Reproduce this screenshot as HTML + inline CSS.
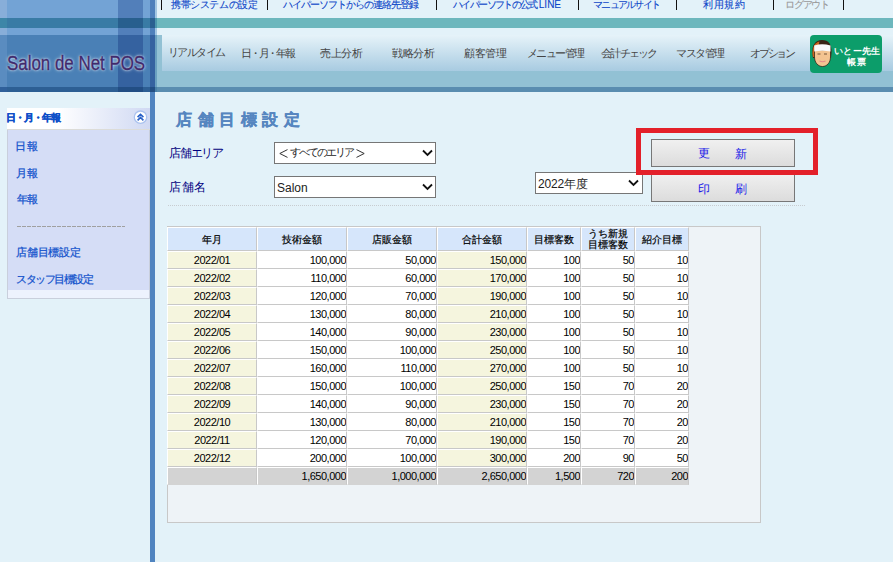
<!DOCTYPE html>
<html><head><meta charset="utf-8">
<style>
*{margin:0;padding:0;box-sizing:border-box}
html,body{width:893px;height:562px;overflow:hidden;background:#e3f2f9;font-family:"Liberation Sans",sans-serif;font-size:12px;color:#222}
.a{position:absolute}
.t{position:absolute;white-space:nowrap;line-height:1}
.tl{position:absolute;top:-2px;font-size:10px;color:#0d45c8;-webkit-text-stroke:0.1px;white-space:nowrap;line-height:12px}
.sep{position:absolute;top:0;width:1px;height:10px;background:#111}
.nv{position:absolute;top:47px;font-size:11px;color:#444;white-space:nowrap;line-height:12px}
.sb{position:absolute;left:17px;font-size:11px;color:#1252cc;-webkit-text-stroke:0.25px;white-space:nowrap;line-height:12px}

td{padding:0;border-left:1px solid #fff;border-top:1px solid #fff;border-right:1px solid #c8c8c8;border-bottom:1px solid #c8c8c8;color:#000;font-size:11px;line-height:11px;letter-spacing:-0.5px;white-space:nowrap;overflow:hidden}
tr.h td{height:24px;background:#d6e6fb;text-align:center;font-size:10px;line-height:11px;letter-spacing:0;-webkit-text-stroke:0.2px}
tr.r td{height:18px;background:#fff;text-align:right}
tr.r td.c{background:#f5f5de;text-align:center}
tr.r td.y{background:#f5f5de}
tr.tot td,tr.tot td.c{background:#d3d3d3;border-bottom-color:#d3d3d3}
</style></head><body>
<!-- header left tiles: cols 0-7,7-118,118-143,143-150,150-155,155-157 ; rows 0-18,18-28,28-35,35-87,87-92 -->
<div class="a" style="left:0;top:0;width:157px;height:92px;background:linear-gradient(to bottom,#73a3d5 0,#73a3d5 18px,#397ba5 18px,#397ba5 28px,#73a3d5 28px,#73a3d5 35px,#4a80b6 35px,#4a80b6 87px,#2d5f94 87px)"></div>
<div class="a" style="left:0;top:0;width:7px;height:92px;background:linear-gradient(to bottom,#88aed9 0,#88aed9 18px,#3d86a8 18px,#3d86a8 28px,#88aed9 28px,#88aed9 35px,#5a8cc0 35px,#5a8cc0 87px,#30609a 87px)"></div>
<div class="a" style="left:118px;top:0;width:25px;height:92px;background:linear-gradient(to bottom,#527fba 0,#527fba 18px,#285f8e 18px,#285f8e 28px,#527fba 28px,#527fba 35px,#3562a0 35px,#3562a0 87px,#224e84 87px)"></div>
<div class="a" style="left:150px;top:0;width:5px;height:92px;background:linear-gradient(to bottom,#4f80bb 0,#4f80bb 18px,#2a6090 18px,#2a6090 28px,#4f80bb 28px,#4f80bb 35px,#3562a0 35px,#3562a0 87px,#224e84 87px)"></div>
<div class="a" style="left:155px;top:0;width:2px;height:92px;background:linear-gradient(to bottom,#a3c6e2 0,#a3c6e2 18px,#4c97ae 18px,#4c97ae 28px,#a3c6e2 28px,#a3c6e2 35px,#6aa0c0 35px,#6aa0c0 87px,#4a80a8 87px)"></div>
<!-- right header -->
<div class="a" style="left:157px;top:18px;width:736px;height:10px;background:#6db7bd"></div>
<div class="a" style="left:157px;top:35px;width:736px;height:52px;background:#92c1d4"></div>
<div class="a" style="left:162px;top:35px;width:731px;height:36px;background:linear-gradient(#e6f3f9,#a8cbe1)"></div>
<div class="a" style="left:157px;top:87px;width:736px;height:5px;background:#5a8db0"></div>
<!-- vertical bar -->
<div class="a" style="left:150px;top:92px;width:5px;height:470px;background:#5084c0"></div>

<!-- logo -->
<div id="logo" class="t" style="left:7px;top:52px;font-size:21px;color:#3f2a6c;letter-spacing:0;transform:scaleX(0.805);transform-origin:0 0;-webkit-text-stroke:0.4px;text-shadow:0 0 4px rgba(235,245,255,0.95),0 0 2px #eef6ff">Salon de Net POS</div>

<!-- top links -->
<div class="sep" style="left:161px"></div>
<div id="tl1" class="tl" style="left:171px;top:-1px;letter-spacing:-0.38px;">携帯システムの設定</div>
<div class="sep" style="left:267px"></div>
<div id="tl2" class="tl" style="left:283px;top:-1px;letter-spacing:-1.0px;">ハイパーソフトからの連絡先登録</div>
<div class="sep" style="left:436px"></div>
<div id="tl3" class="tl" style="left:453px;top:-1px;letter-spacing:-1.62px;">ハイパーソフトの公式<span style="letter-spacing:0;margin-left:2px">LINE</span></div>
<div class="sep" style="left:578px"></div>
<div id="tl4" class="tl" style="left:593px;top:-1px;letter-spacing:-1.71px;">マニュアルサイト</div>
<div class="sep" style="left:676px"></div>
<div id="tl5" class="tl" style="left:703px;top:-1px;letter-spacing:0.67px;">利用規約</div>
<div class="sep" style="left:773px"></div>
<div id="tl6" class="tl" style="left:785px;top:-1px;letter-spacing:-1.25px;color:#999">ログアウト</div>
<div class="sep" style="left:843px"></div>

<!-- nav -->
<div id="nv1" class="nv" style="left:168px;top:46px;letter-spacing:-1.6px;">リアルタイム</div>
<div id="nv2" class="nv" style="left:241px;top:47px;letter-spacing:-2.2px;">日・月・年報</div>
<div id="nv3" class="nv" style="left:320px;top:47px;letter-spacing:-0.33px;">売上分析</div>
<div id="nv4" class="nv" style="left:392px;top:47px;letter-spacing:-0.33px;">戦略分析</div>
<div id="nv5" class="nv" style="left:464px;top:47px;letter-spacing:-0.33px;">顧客管理</div>
<div id="nv6" class="nv" style="left:527px;top:47px;letter-spacing:-1.6px;">メニュー管理</div>
<div id="nv7" class="nv" style="left:601px;top:47px;letter-spacing:-1.93px;">会計 チェック</div>
<div id="nv8" class="nv" style="left:676px;top:47px;letter-spacing:-1.5px;">マスタ管理</div>
<div id="nv9" class="nv" style="left:750px;top:47px;letter-spacing:-2.25px;">オプション</div>
<!-- green button -->
<div class="a" style="left:810px;top:35px;width:72px;height:38px;background:#0c9d6a;border-radius:4px"></div>
<svg class="a" style="left:811px;top:39px" width="22" height="28" viewBox="0 0 22 28">
  <path d="M1.5 15 C0.5 6 4.5 1 11 1 C17.5 1 21 5.5 20.5 14 L20 19 L2 19 Z" fill="#3a2414"/>
  <path d="M1.5 15 C1.5 8 3.5 3.5 8.5 2.5 L5 18 L2 18 Z" fill="#c8641e"/>
  <path d="M3.5 11 L19.5 11 L19.5 18 C19.5 23.5 16 27.5 11.5 27.5 C7 27.5 3.5 23.5 3.5 18 Z" fill="#f3c491" stroke="#2a1a10" stroke-width="0.7"/>
  <path d="M3.2 6.5 Q11 3.8 19.5 6.5 L19.5 12.5 Q11 10.8 3.2 12.5 Z" fill="#fafafa"/>
  <path d="M6.5 15 h3 M13 15 h3" stroke="#6a4a30" stroke-width="0.9"/>
  <path d="M8.5 22 Q11.5 23.5 14.5 22" stroke="#e58a8a" stroke-width="1.1" fill="none"/>
</svg>
<div id="g1" class="t" style="left:834px;top:47px;letter-spacing:0.25px;font-size:9px;color:#fff;font-weight:bold">いとー先生</div>
<div id="g2" class="t" style="left:847px;top:58px;letter-spacing:1.0px;font-size:9px;color:#fff;font-weight:bold">帳票</div>

<!-- sidebar -->
<div class="a" style="left:7px;top:108px;width:143px;height:191px;background:#d5ddf6;border:1px solid #c9cfdc;border-top:none"></div>
<div class="a" style="left:7px;top:108px;width:143px;height:22px;background:linear-gradient(to right,#ffffff 0,#ffffff 35%,#d0d9f3 100%);border-bottom:1px solid #dcdcd8"></div>
<div class="a" style="left:8px;top:290px;width:141px;height:8px;background:#edf2fd"></div>
<div id="sbh" class="t" style="left:6px;top:113px;letter-spacing:-1.0px;font-size:10px;font-weight:bold;color:#0f4fc8;-webkit-text-stroke:0.35px">日・月・年報</div>
<svg class="a" style="left:133px;top:110px" width="15" height="15" viewBox="0 0 15 15">
  <circle cx="7.5" cy="7.2" r="6.2" fill="#fff" stroke="#aac2ef" stroke-width="1.3"/>
  <path d="M4.6 7.2 L7.5 4.4 L10.4 7.2 M4.6 10.3 L7.5 7.5 L10.4 10.3" stroke="#2a62c8" stroke-width="1.7" fill="none"/>
</svg>
<div id="sb1" class="sb" style="left:15px;top:140px;letter-spacing:1.0px;">日報</div>
<div id="sb2" class="sb" style="left:16px;top:167px;letter-spacing:0.0px;">月報</div>
<div id="sb3" class="sb" style="left:17px;top:193px;letter-spacing:-1.0px;">年報</div>
<div class="a" style="left:17px;top:226px;width:108px;height:1px;background:repeating-linear-gradient(to right,#a0a0a0 0,#a0a0a0 4px,transparent 4px,transparent 5px)"></div>
<div id="sb4" class="sb" style="left:16px;top:246px;letter-spacing:-0.2px;">店舗目標設定</div>
<div id="sb5" class="sb" style="left:16px;top:273px;letter-spacing:-1.43px;">スタッフ目標設定</div>

<!-- title -->
<div id="ttl" class="t" style="left:176px;top:112px;letter-spacing:5.6px;font-size:16px;font-weight:bold;color:#5686c0;-webkit-text-stroke:0.3px;">店舗目標設定</div>
<div id="lb1" class="t" style="left:169px;top:147px;letter-spacing:-1.25px;font-size:12px;color:#000080;">店舗エリア</div>
<div id="lb2" class="t" style="left:169px;top:181px;letter-spacing:0.5px;font-size:12px;color:#000080;">店舗名</div>

<!-- selects -->
<div class="a" style="left:274px;top:142px;width:162px;height:22px;background:#fff;border:1px solid #767676"></div>
<svg class="a" style="left:279px;top:149px" width="9" height="9" viewBox="0 0 9 9"><path d="M8.5 0.6 L0.8 4.5 L8.5 8.4" stroke="#333" stroke-width="1" fill="none"/></svg><div id="s1b" class="t" style="left:290px;top:147px;letter-spacing:-2.0px;font-size:11px;color:#222">すべてのエリア</div><svg class="a" style="left:356px;top:149px" width="9" height="9" viewBox="0 0 9 9"><path d="M0.5 0.6 L8.2 4.5 L0.5 8.4" stroke="#333" stroke-width="1" fill="none"/></svg>
<svg class="a" style="left:422px;top:149px" width="11" height="8" viewBox="0 0 11 8"><path d="M1 1.5 L5.5 6 L10 1.5" stroke="#111" stroke-width="1.8" fill="none"/></svg>
<div class="a" style="left:274px;top:176px;width:162px;height:22px;background:#fff;border:1px solid #767676"></div>
<div id="st2" class="t" style="left:277px;top:182px;letter-spacing:0.0px;font-size:12px;color:#222">Salon</div>
<svg class="a" style="left:422px;top:183px" width="11" height="8" viewBox="0 0 11 8"><path d="M1 1.5 L5.5 6 L10 1.5" stroke="#111" stroke-width="1.8" fill="none"/></svg>
<div class="a" style="left:535px;top:172px;width:108px;height:22px;background:#fff;border:1px solid #767676"></div>
<div id="st3" class="t" style="left:538px;top:178px;letter-spacing:-0.2px;font-size:12px;color:#222">2022年度</div>
<svg class="a" style="left:628px;top:179px" width="11" height="8" viewBox="0 0 11 8"><path d="M1 1.5 L5.5 6 L10 1.5" stroke="#111" stroke-width="1.8" fill="none"/></svg>

<!-- buttons -->
<div class="a" style="left:651px;top:139px;width:144px;height:28px;background:linear-gradient(#f0f0f0,#dcdcdc);border:1px solid #777"></div>
<div id="b1" class="t" style="left:698px;top:147px;letter-spacing:0px;font-size:12px;color:#1818e8">更</div>
<div id="b2" class="t" style="left:735px;top:148px;letter-spacing:0px;font-size:12px;color:#1818e8">新</div>
<div class="a" style="left:651px;top:173px;width:144px;height:29px;background:linear-gradient(#f0f0f0,#dcdcdc);border:1px solid #777"></div>
<div id="b3" class="t" style="left:698px;top:183px;letter-spacing:0px;font-size:12px;color:#1818e8">印</div>
<div id="b4" class="t" style="left:735px;top:183px;letter-spacing:0px;font-size:12px;color:#1818e8">刷</div>
<div class="a" style="left:636px;top:128px;width:182px;height:47px;border:5px solid #e3202a"></div>

<!-- dotted line -->
<div class="a" style="left:168px;top:205px;width:637px;height:1px;background:repeating-linear-gradient(to right,#c8ccd0 0,#c8ccd0 1px,transparent 1px,transparent 2px)"></div>

<!-- table container -->
<div class="a" style="left:167px;top:226px;width:594px;height:297px;background:#eef3f7;border:1px solid #c8c8c8"></div>
<table class="a" style="left:167px;top:227px;border-collapse:separate;border-spacing:0;table-layout:fixed;width:522px">
<colgroup><col style="width:90px"><col style="width:90px"><col style="width:90px"><col style="width:90px"><col style="width:54px"><col style="width:54px"><col style="width:54px"></colgroup>
<tr class="h"><td id="h0">年月</td><td id="h1">技術金額</td><td>店販金額</td><td>合計金額</td><td>目標客数</td><td id="h5">うち新規<br>目標客数</td><td>紹介目標</td></tr>
<tr class="r"><td id="c0" class="c">2022/01</td><td id="c1" class="n">100,000</td><td class="n">50,000</td><td class="y">150,000</td><td class="n">100</td><td class="n">50</td><td class="n">10</td></tr>
<tr class="r"><td class="c">2022/02</td><td class="n">110,000</td><td class="n">60,000</td><td class="y">170,000</td><td class="n">100</td><td class="n">50</td><td class="n">10</td></tr>
<tr class="r"><td class="c">2022/03</td><td class="n">120,000</td><td class="n">70,000</td><td class="y">190,000</td><td class="n">100</td><td class="n">50</td><td class="n">10</td></tr>
<tr class="r"><td class="c">2022/04</td><td class="n">130,000</td><td class="n">80,000</td><td class="y">210,000</td><td class="n">100</td><td class="n">50</td><td class="n">10</td></tr>
<tr class="r"><td class="c">2022/05</td><td class="n">140,000</td><td class="n">90,000</td><td class="y">230,000</td><td class="n">100</td><td class="n">50</td><td class="n">10</td></tr>
<tr class="r"><td class="c">2022/06</td><td class="n">150,000</td><td class="n">100,000</td><td class="y">250,000</td><td class="n">100</td><td class="n">50</td><td class="n">10</td></tr>
<tr class="r"><td class="c">2022/07</td><td class="n">160,000</td><td class="n">110,000</td><td class="y">270,000</td><td class="n">100</td><td class="n">50</td><td class="n">10</td></tr>
<tr class="r"><td class="c">2022/08</td><td class="n">150,000</td><td class="n">100,000</td><td class="y">250,000</td><td class="n">150</td><td class="n">70</td><td class="n">20</td></tr>
<tr class="r"><td class="c">2022/09</td><td class="n">140,000</td><td class="n">90,000</td><td class="y">230,000</td><td class="n">150</td><td class="n">70</td><td class="n">20</td></tr>
<tr class="r"><td class="c">2022/10</td><td class="n">130,000</td><td class="n">80,000</td><td class="y">210,000</td><td class="n">150</td><td class="n">70</td><td class="n">20</td></tr>
<tr class="r"><td class="c">2022/11</td><td class="n">120,000</td><td class="n">70,000</td><td class="y">190,000</td><td class="n">150</td><td class="n">70</td><td class="n">20</td></tr>
<tr class="r"><td class="c">2022/12</td><td class="n">200,000</td><td class="n">100,000</td><td class="y">300,000</td><td class="n">200</td><td class="n">90</td><td class="n">50</td></tr>
<tr class="r tot"><td class="c"></td><td class="n">1,650,000</td><td class="n">1,000,000</td><td class="n">2,650,000</td><td class="n">1,500</td><td class="n">720</td><td class="n">200</td></tr>
</table>

</body></html>
